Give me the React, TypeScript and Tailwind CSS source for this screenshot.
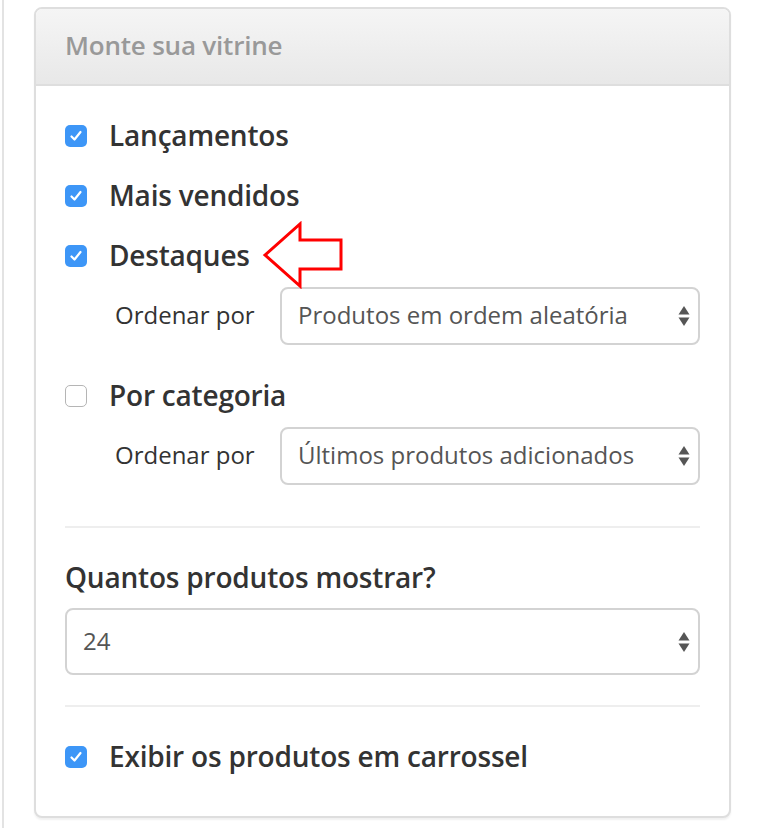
import React from "react";

function Check({ checked }: { checked: boolean }) {
  return checked ? (
    <span className="flex h-[22px] w-[22px] shrink-0 items-center justify-center rounded-[5px] bg-[#3d96f7]">
      <svg width="14" height="14" viewBox="0 0 14 14" fill="none">
        <path d="M2.5 7.5 L5.5 10.5 L11.5 3" stroke="white" strokeWidth="2.2" strokeLinecap="round" strokeLinejoin="round" />
      </svg>
    </span>
  ) : (
    <span className="h-[22px] w-[22px] shrink-0 rounded-[5px] border border-[#b5b5b5] bg-white" />
  );
}

function Row({ checked, label }: { checked: boolean; label: string }) {
  return (
    <div className="flex h-[60px] items-center gap-[22px]">
      <Check checked={checked} />
      <span className="relative -top-[1px] text-[28px] font-semibold tracking-[-0.2px] text-[#333]">{label}</span>
    </div>
  );
}

function Arrows() {
  return (
    <svg width="12" height="22" viewBox="0 0 12 22" className="shrink-0">
      <path d="M6 1 L11.5 9.5 L0.5 9.5 Z" fill="#555" />
      <path d="M6 21 L11.5 12.5 L0.5 12.5 Z" fill="#555" />
    </svg>
  );
}

function Select({ value, h = "h-[58px]" }: { value: string; h?: string }) {
  return (
    <div className={`flex ${h} flex-1 items-center justify-between rounded-[8px] border-2 border-[#d3d3d3] pl-[16px] pr-[8px]`}>
      <span className="relative -top-[1px] text-[24px] text-[#555]">{value}</span>
      <Arrows />
    </div>
  );
}

function SortRow({ value }: { value: string }) {
  return (
    <div className="flex items-center py-[1px] pl-[50px]">
      <span className="relative -top-[1px] w-[165px] text-[24px] text-[#333]">Ordenar por</span>
      <Select value={value} />
    </div>
  );
}

export default function App() {
  return (
    <div
      className="relative flex h-[828px] w-[762px] bg-white"
      style={{ fontFamily: '"Open Sans", "Noto Sans", sans-serif' }}
    >
      <div className="ml-[2px] w-[2px] bg-[#e3e3e3]" />
      <div className="ml-[30px] mt-[7px] h-[811px] w-[697px] rounded-[8px] border-2 border-[#dedede] bg-white shadow-[0_2px_2px_rgba(0,0,0,0.06)]">
        <div className="flex h-[77px] items-center rounded-t-[6px] border-b-2 border-[#dedede] bg-gradient-to-b from-[#f5f5f5] to-[#e8e8e8] px-[29px]">
          <span className="relative -top-[1px] text-[26px] font-semibold tracking-[-0.2px] text-[#999]">Monte sua vitrine</span>
        </div>
        <div className="px-[29px] pt-[20px]">
          <Row checked label="Lançamentos" />
          <Row checked label="Mais vendidos" />
          <div className="relative">
            <Row checked label="Destaques" />
            <svg className="absolute left-[197px] top-[-5px]" width="82" height="68" viewBox="0 0 82 68">
              <path d="M3 34 L38 3 L38 19 L79 19 L79 48 L38 48 L38 65 Z" fill="none" stroke="#ff0000" strokeWidth="3" strokeLinejoin="miter" />
            </svg>
          </div>
          <SortRow value="Produtos em ordem aleatória" />
          <div className="mt-[20px]">
            <Row checked={false} label="Por categoria" />
          </div>
          <SortRow value="Últimos produtos adicionados" />
          <div className="mt-[40px] h-[2px] bg-[#eeeeee]" />
          <div className="mt-[28px] text-[28px] font-semibold tracking-[-0.2px] text-[#333]">Quantos produtos mostrar?</div>
          <div className="mt-[10px] flex">
            <Select value="24" h="h-[67px]" />
          </div>
          <div className="mt-[30px] h-[2px] bg-[#eeeeee]" />
          <div className="mt-[20px]">
            <Row checked label="Exibir os produtos em carrossel" />
          </div>
        </div>
      </div>
    </div>
  );
}
